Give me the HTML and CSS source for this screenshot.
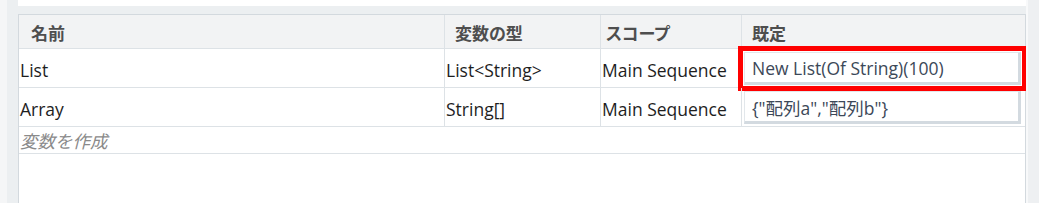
FILE: index.html
```html
<!DOCTYPE html>
<html lang="ja">
<head>
<meta charset="utf-8">
<title>変数</title>
<link rel="stylesheet" href="styles.css">
</head>
<body>
<div class="panel">
  <div class="main">
    <div class="upper"></div>
    <div class="vars">
      <div class="row head">
        <div class="cell c1">名前</div>
        <div class="cell c2">変数の型</div>
        <div class="cell c3">スコープ</div>
        <div class="cell c4">既定</div>
      </div>
      <div class="row data">
        <div class="cell c1">List</div>
        <div class="cell c2">List&lt;String&gt;</div>
        <div class="cell c3">Main Sequence</div>
        <div class="cell c4"><div class="box marked">New List(Of String)(100)</div></div>
      </div>
      <div class="row data">
        <div class="cell c1">Array</div>
        <div class="cell c2">String[]</div>
        <div class="cell c3">Main Sequence</div>
        <div class="cell c4"><div class="box">{"配列a","配列b"}</div></div>
      </div>
      <div class="create">変数を作成</div>
    </div>
  </div>
  <div class="rail"></div>
</div>
</body>
</html>
```
FILE: styles.css
```css
html, body {
  margin: 0;
  padding: 0;
}
body {
  width: 1039px;
  height: 203px;
  overflow: hidden;
  background: #f5f6f7;
  font-family: "Open Sans", "Noto Sans CJK JP", sans-serif;
  font-size: 17.5px;
  color: #1e1e1e;
}
.panel {
  margin-left: 7px;
  height: 203px;
  display: flex;
  background: #eceff1;
  padding-left: 11px;
  box-sizing: border-box;
}
.main {
  width: 1008px;
  display: flex;
  flex-direction: column;
}
.upper {
  height: 6px;
  background: #ffffff;
  margin-bottom: 8px;
}
.vars {
  flex: 1;
  background: #ffffff;
  border: 1px solid #d3d9de;
  border-bottom: none;
}
.row {
  display: grid;
  grid-template-columns: 426px 156px 141px 1fr;
  border-bottom: 1px solid #dde2e6;
}
.cell {
  border-right: 1px solid #dde2e6;
  display: flex;
  align-items: center;
  white-space: nowrap;
}
.cell.c4 {
  border-right: none;
}
.head {
  height: 34px;
  box-sizing: border-box;
  background: #f2f3f4;
  color: #4e4e4e;
  font-weight: 700;
  font-size: 17px;
  font-feature-settings: "palt";
}
.head .cell {
  padding-top: 1px;
}
.head .c1 { padding-left: 12px; }
.head .c2 { padding-left: 10px; }
.head .c3 { padding-left: 5px; }
.head .c4 { padding-left: 10px; }
.data {
  height: 39px;
  box-sizing: border-box;
}
.data .cell {
  padding-left: 1px;
  padding-top: 3px;
}
.data .c4 {
  padding: 3px 4px 2px 2px;
  align-items: stretch;
}
.box {
  flex: 1;
  display: flex;
  align-items: center;
  padding-left: 7px;
  padding-top: 1px;
  background: #ffffff;
  border: 1px solid #e2e7eb;
  border-right: 3px solid #d3dae0;
  border-bottom: 3px solid #d3dae0;
  color: #3c4858;
}
.marked {
  outline: 5px solid #ff0000;
  outline-offset: 1px;
}
.create {
  height: 27px;
  box-sizing: border-box;
  border-bottom: 1px solid #dde2e6;
  padding-left: 1px;
  display: flex;
  align-items: center;
  color: #8a8a8a;
  font-style: italic;
}
.rail {
  flex: 1;
  background: linear-gradient(to right, #f8f9fa 0, #f8f9fa 2px, #eef0f2 2px);
}
```
